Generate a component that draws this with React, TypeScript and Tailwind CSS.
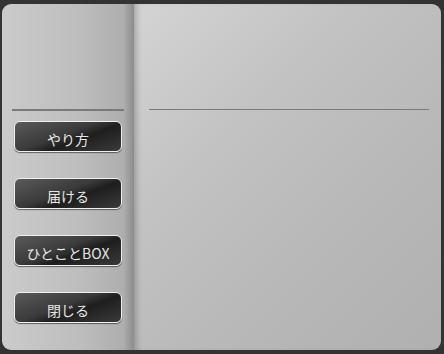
const LABELS = ["やり方", "届ける", "ひとことBOX", "閉じる"];

function MenuButton({ label }: { label: string }) {
  return (
    <button className="w-[108px] h-[31px] rounded-[6px] border border-[#f0f0f0] bg-[linear-gradient(160deg,#5a5a5a_0%,#3a3a3a_45%,#1e1e1e_60%,#3a3a3a_100%)] text-[14px] leading-none pt-[4px] text-[#e6e6e6] shadow-[0_1px_1px_rgba(0,0,0,0.5)] flex items-center justify-center">
      {label}
    </button>
  );
}

export default function App() {
  return (
    <div
      className="w-[444px] h-[354px] bg-[#333333] pt-[4px] pl-[2px] pr-[3px] pb-[4px]"
      style={{ fontFamily: '"Noto Sans CJK JP", "Noto Sans", sans-serif' }}
    >
      <div className="flex h-full rounded-[9px] overflow-hidden">
        {/* sidebar */}
        <div className="w-[132px] shrink-0 flex flex-col bg-[linear-gradient(90deg,#cbcbcb_0%,#bdbdbd_60%,#aeaeae_92%,#8c8c8c_100%)]">
          <div className="h-[105px] shrink-0" />
          <div className="mx-[10px] h-[2px] bg-[#7a7a7a]" />
          <div className="flex flex-col gap-[26px] pl-[12px] pt-[10px]">
            {LABELS.map((l) => (
              <MenuButton key={l} label={l} />
            ))}
          </div>
        </div>
        {/* main */}
        <div className="flex-1 flex flex-col bg-[linear-gradient(135deg,#d4d4d4_0%,#c2c2c2_35%,#b8b8b8_65%,#b0b0b0_100%)] shadow-[inset_6px_0_6px_-4px_rgba(0,0,0,0.25)]">
          <div className="h-[105px] shrink-0" />
          <div className="ml-[15px] mr-[12px] h-[1px] bg-[#7a7a7a]" />
        </div>
      </div>
    </div>
  );
}
